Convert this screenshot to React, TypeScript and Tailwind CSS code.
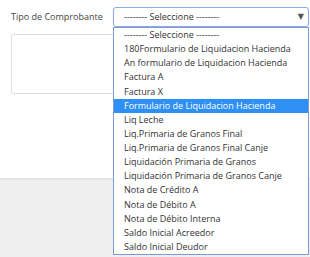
import React from "react";

const options = [
  "-------- Seleccione --------",
  "180Formulario de Liquidacion Hacienda",
  "An formulario de Liquidacion Hacienda",
  "Factura A",
  "Factura X",
  "Formulario de Liquidacion Hacienda",
  "Liq Leche",
  "Liq.Primaria de Granos Final",
  "Liq.Primaria de Granos Final Canje",
  "Liquidación Primaria de Granos",
  "Liquidación Primaria de Granos Canje",
  "Nota de Crédito A",
  "Nota de Débito A",
  "Nota de Débito Interna",
  "Saldo Inicial Acreedor",
  "Saldo Inicial Deudor",
];

export default function App() {
  return (
    <div className="relative w-[310px] h-[257px] bg-[#efefef] overflow-hidden font-['Open_Sans',sans-serif] text-[9px]">
      <div className="bg-white h-[178px] pt-[7px] pl-[11px] pr-[1px] shadow-[0_1px_2px_rgba(0,0,0,0.08)]">
        <div className="flex items-center h-[20px]">
          <div className="w-[102px] text-[#444]">Tipo de Comprobante</div>
          <div className="flex-1 h-[20px] border border-[#86acea] rounded-[3px] flex items-center pl-[10px] pr-[4px] text-[#333]">
            <span className="flex-1">-------- Seleccione --------</span>
            <span className="text-[8px] text-[#555] leading-none font-['DejaVu_Sans',sans-serif]">▼</span>
          </div>
        </div>
        <div className="mt-[7px] mr-[9px] h-[60px] border border-[#dddddd] rounded-[3px]" />
      </div>
      <div className="absolute left-[113px] top-[27px] w-[196px] border border-[#7b9bd6] bg-white">
        {options.map((o, i) => (
          <div
            key={i}
            className={
              "h-[14.125px] leading-[14.125px] pl-[10px] whitespace-nowrap " +
              (i === 5 ? "bg-[#2e8ff5] text-white" : "text-[#333]")
            }
          >
            {o}
          </div>
        ))}
      </div>
    </div>
  );
}
